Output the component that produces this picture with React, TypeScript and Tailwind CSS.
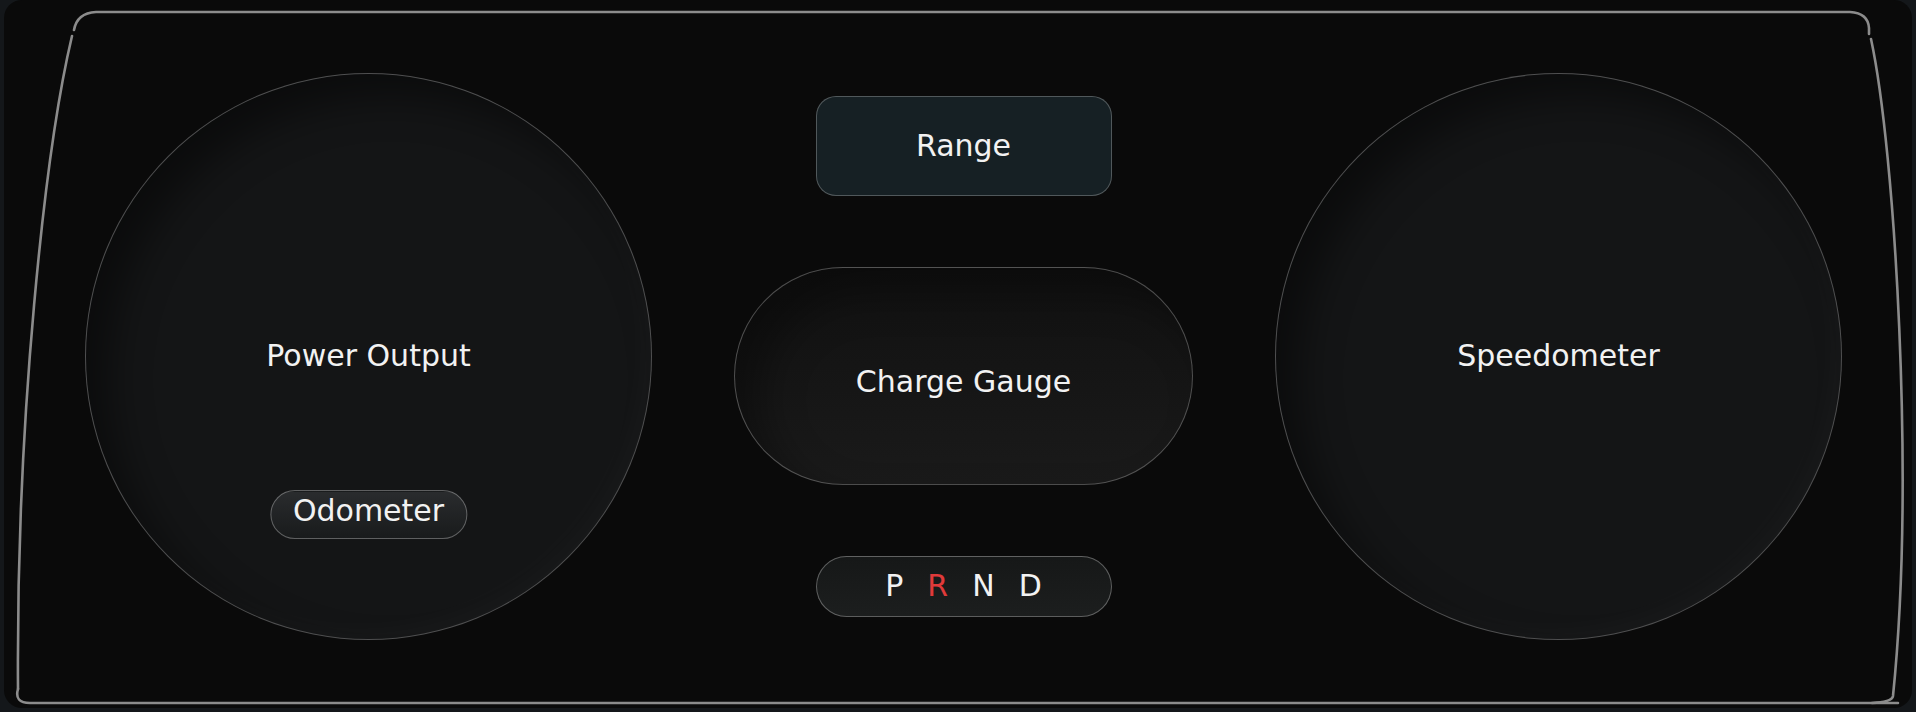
const font = { fontFamily: '"DejaVu Sans", "Noto Sans", sans-serif' };

function Frame() {
  return (
    <svg
      className="pointer-events-none absolute inset-0 h-full w-full"
      viewBox="0 0 1916 712"
      fill="none"
      stroke="#8c8c8c"
      strokeWidth="2.6"
      strokeLinecap="round"
    >
      <path d="M74 30 Q77 13 96 12 L1850 12 Q1868 13 1869 28 L1869 34" />
      <path d="M72 36 C45 150 16 420 18 689" />
      <path d="M18 689 Q14 703 30 703 L1898 703" />
      <path d="M1871 39 C1895 150 1915 480 1893 696 Q1892 702 1872 703" />
    </svg>
  );
}

function Dial({ label, children }: { label: string; children?: React.ReactNode }) {
  return (
    <div className="relative flex h-[567px] w-[567px] shrink-0 items-center justify-center rounded-full border border-white/25 bg-[#141516] shadow-[inset_22px_22px_40px_rgba(0,0,0,0.45),inset_-10px_-10px_24px_rgba(255,255,255,0.025)]">
      <span className="text-3xl text-[#f2f2f2]">{label}</span>
      {children}
    </div>
  );
}

export default function App() {
  return (
    <div className="relative h-[712px] w-full bg-[#14171a] px-1 pb-1" style={font}>
      <div className="h-full rounded-[18px] bg-[#0a0a0a]">
        <div className="flex h-full items-center gap-[82px] pl-[81px] pt-1">
          <Dial label="Power Output">
            <div className="absolute bottom-[100px] left-1/2 -translate-x-1/2 rounded-full border border-white/30 bg-gradient-to-b from-[#2a2c2e] to-[#191b1c] px-[22px] pt-[1px] pb-[9px] text-3xl leading-[37px] text-[#f2f2f2]">
              Odometer
            </div>
          </Dial>

          <div className="flex w-[459px] shrink-0 flex-col items-center gap-[71px]">
            <div className="flex h-[100px] w-[296px] items-center justify-center rounded-[20px] border border-white/25 bg-[#162024] text-3xl text-[#f2f2f2]">
              Range
            </div>
            <div className="flex h-[218px] w-[459px] items-center justify-center rounded-full border border-white/25 bg-gradient-to-b from-[#111111] to-[#1a1a1a] pt-[13px] text-3xl text-[#f2f2f2] shadow-[inset_24px_24px_40px_rgba(0,0,0,0.35)]">
              Charge Gauge
            </div>
            <div className="flex h-[61px] w-[296px] items-center justify-center gap-6 rounded-full border border-white/30 bg-gradient-to-b from-[#161818] to-[#1c1e1e] text-3xl text-[#f2f2f2]">
              <span>P</span>
              <span className="text-[#e03a3a]">R</span>
              <span>N</span>
              <span>D</span>
            </div>
          </div>

          <Dial label="Speedometer" />
        </div>
      </div>
      <Frame />
    </div>
  );
}
